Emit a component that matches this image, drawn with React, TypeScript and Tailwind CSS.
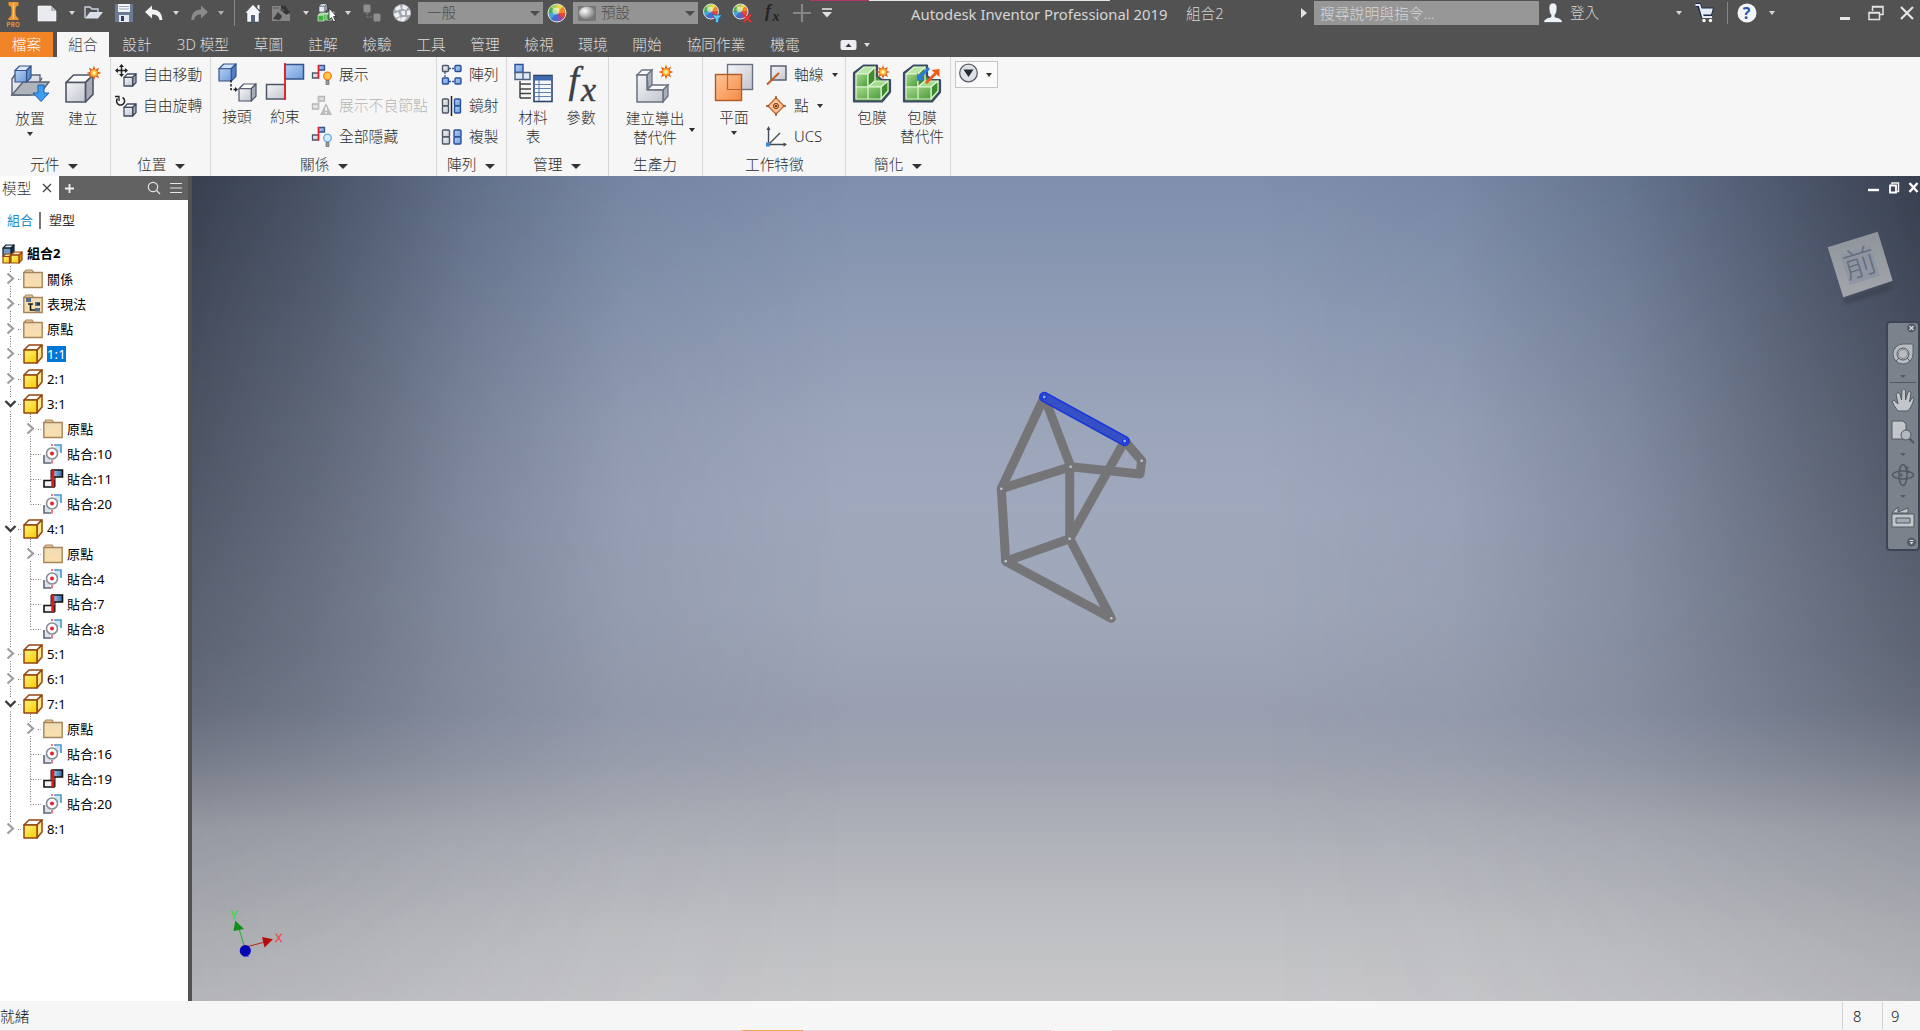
import React from "react";

type Kids = { children?: React.ReactNode };

function Svg({ w, h, className = "", children }: { w: number; h: number; className?: string } & Kids) {
  return (
    <svg width={w} height={h} viewBox={`0 0 ${w} ${h}`} fill="none" className={"block shrink-0 overflow-visible " + className}>
      {children}
    </svg>
  );
}

function Caret({ className = "", w = 6, h = 4 }: { className?: string; w?: number; h?: number }) {
  return (
    <Svg w={w} h={h} className={className}>
      <path d={`M0 0H${w}L${w / 2} ${h}Z`} fill="currentColor" />
    </Svg>
  );
}

/* ---------- shared drawing pieces ---------- */

function Spark({ x, y, s = 1 }: { x: number; y: number; s?: number }) {
  return (
    <g transform={`translate(${x} ${y}) scale(${s})`}>
      <path
        d="M0-7.5L1.4-3.6L5.2-5.2L3.6-1.4L7.5 0L3.6 1.4L5.2 5.2L1.4 3.6L0 7.5L-1.4 3.6L-5.2 5.2L-3.6 1.4L-7.5 0L-3.6-1.4L-5.2-5.2L-1.4-3.6Z"
        fill="#e0641a"
      />
      <circle r="3.5" fill="#ffb32e" />
      <circle r="1.8" fill="#fff3b0" />
    </g>
  );
}

function Cube({ x, y, s, front, top, side, stroke = "#3f4b60", sw = 1.2 }: { x: number; y: number; s: number; front: string; top: string; side: string; stroke?: string; sw?: number }) {
  const d = s * 0.28;
  const f = s - d;
  return (
    <g stroke={stroke} strokeWidth={sw} strokeLinejoin="round">
      <path d={`M${x} ${y + d}L${x + d} ${y}H${x + s}L${x + f} ${y + d}Z`} fill={top} />
      <path d={`M${x + f} ${y + d}L${x + s} ${y}V${y + f}L${x + f} ${y + s}Z`} fill={side} />
      <path d={`M${x} ${y + d}H${x + f}V${y + s}H${x}Z`} fill={front} />
    </g>
  );
}

function Wheel({ cx, cy, r }: { cx: number; cy: number; r: number }) {
  const colors = ["#f6d23c", "#f0892e", "#e2483c", "#8f4fb0", "#3f6ed2", "#46a8d8", "#4cb050", "#a6d048"];
  return (
    <g>
      {colors.map((c, i) => {
        const a = (i * Math.PI) / 4 - Math.PI / 2;
        const b = a + Math.PI / 4;
        return (
          <path
            key={c}
            d={`M${cx} ${cy}L${cx + r * Math.cos(a)} ${cy + r * Math.sin(a)}A${r} ${r} 0 0 1 ${cx + r * Math.cos(b)} ${cy + r * Math.sin(b)}Z`}
            fill={c}
          />
        );
      })}
      <circle cx={cx} cy={cy} r={r} stroke="#e4e4ea" strokeWidth="1" />
      <circle cx={cx - 1} cy={cy - 2} r={r * 0.4} fill="#fff" opacity=".55" />
    </g>
  );
}

function Defs() {
  return (
    <svg width="0" height="0" className="absolute">
      <defs>
        <linearGradient id="gBlue" x1="0" y1="0" x2="1" y2="1">
          <stop offset="0" stopColor="#b4cff2" />
          <stop offset="1" stopColor="#6f9ddc" />
        </linearGradient>
        <linearGradient id="gGrey" x1="0" y1="0" x2="1" y2="1">
          <stop offset="0" stopColor="#f4f5f7" />
          <stop offset="1" stopColor="#c2c6cf" />
        </linearGradient>
        <linearGradient id="gOrange" x1="0" y1="0" x2="1" y2="1">
          <stop offset="0" stopColor="#ffc596" />
          <stop offset="1" stopColor="#f58a45" />
        </linearGradient>
        <linearGradient id="gGreen" x1="0" y1="0" x2="1" y2="1">
          <stop offset="0" stopColor="#a6dc8c" />
          <stop offset="1" stopColor="#4c9a3a" />
        </linearGradient>
        <linearGradient id="gYellow" x1="0" y1="0" x2="1" y2="1">
          <stop offset="0" stopColor="#fff27a" />
          <stop offset="1" stopColor="#f5cc00" />
        </linearGradient>
        <linearGradient id="gTan" x1="0" y1="0" x2="0" y2="1">
          <stop offset="0" stopColor="#f0dcb8" />
          <stop offset="1" stopColor="#fadfaa" />
        </linearGradient>
        <linearGradient id="gSteel" x1="0" y1="0" x2="1" y2="0">
          <stop offset="0" stopColor="#a9d0f2" />
          <stop offset="1" stopColor="#2f68a8" />
        </linearGradient>
        <linearGradient id="gFace" x1="0" y1="0" x2="0" y2="1">
          <stop offset="0" stopColor="#8f949c" />
          <stop offset="1" stopColor="#a3a6ab" />
        </linearGradient>
        <radialGradient id="gBall" cx=".35" cy=".35" r=".7">
          <stop offset="0" stopColor="#fff" />
          <stop offset="1" stopColor="#747474" />
        </radialGradient>
      </defs>
    </svg>
  );
}

/* ---------- title bar ---------- */

function TitleBar() {
  return (
    <div className="flex h-8 items-start bg-[#525252] text-[#d6d6d6]">
      <div className="flex h-[26px] w-[1920px] items-center">
        <Svg w={20} h={26} className="ml-1">
          <path d="M4.500 2H14.500V5.500Q11.500 6 11.500 9V13Q11.500 17 14.500 18V20H4.500V18Q7.500 17 7.500 13V9Q7.500 6 4.500 5.500Z" fill="#eb962f" />
          <path d="M9.500 3V19" stroke="#ffc476" strokeWidth="1.500" />
          <text x="2.500" y="26.500" fontSize="6" fontWeight="700" fill="#e8963a" fontFamily="Inter" letterSpacing=".3">PRO</text>
        </Svg>
        <Svg w={20} h={20} className="ml-[13px]">
          <path d="M1 3H14L19 8V18H1Z" fill="#e9ebf0" stroke="#fff" strokeWidth=".6" />
          <path d="M14 3V8H19Z" fill="#aeb4c0" />
        </Svg>
        <Caret className="ml-3" />
        <Svg w={20} h={20} className="ml-2">
          <path d="M2 15V4H7L9 6H15V9" stroke="#c9d1de" strokeWidth="1.400" />
          <path d="M2 15.500L7 9H20L15 15.500Z" fill="#d9e0ec" />
        </Svg>
        <Svg w={20} h={20} className="ml-[11px]">
          <path d="M1 1H19V19H1Z" fill="#6b7b95" />
          <path d="M4 1H16V9H4Z" fill="#f2f4f8" />
          <path d="M5 3.500H15M5 6H15" stroke="#9aa3b5" />
          <path d="M5 12H15V19H5Z" fill="#e4e8f0" />
          <path d="M7 13H10V18H7Z" fill="#33415c" />
        </Svg>
        <Svg w={20} h={20} className="ml-2.5">
          <path d="M1 9L8 2.500V6.500Q18 6 18.500 17H15.500Q14.500 11 8 11.500V15.500Z" fill="#f2f3f5" />
        </Svg>
        <Caret className="ml-[9px]" />
        <Svg w={20} h={20} className="ml-[11px]">
          <path d="M18 9L11 2.500V6.500Q2 6 1 17H4Q5 11 11 11.500V15.500Z" fill="#8a8a8a" />
        </Svg>
        <Caret className="ml-2 text-[#b0b0b0]" />
        <div className="ml-2.5 h-[26px] w-px bg-[#8a8a8a]" />
        <Svg w={20} h={20} className="ml-2">
          <path d="M2 10L10 1.500L18 10H16V19H4V10Z" fill="#f4f5f7" stroke="#33415c" strokeWidth=".5" />
          <path d="M8 12H12V19H8Z" fill="#5a6478" />
          <path d="M14.500 2H16.500V7L14.500 5Z" fill="#f4f5f7" />
        </Svg>
        <Svg w={20} h={20} className="ml-2">
          <path d="M1 3H11L9 7L14 11H19V18H1Z" fill="#858585" />
          <path d="M2 16L7 9L11 13L9 17Z" fill="#3e3e3e" />
          <path d="M10 3Q16 2 17 8H19.500L15.500 12L11.500 8H14Q13.500 5 10 5.500Z" fill="#333" />
          <path d="M2 5H8" stroke="#666" strokeWidth="1.500" />
        </Svg>
        <Caret className="ml-3" />
        <Svg w={20} h={20} className="ml-2">
          <Cube x={2} y={1} s={8} front="#e8eaee" top="#fff" side="#b8bcc6" sw={0.6} />
          <Cube x={1} y={10} s={8} front="#3fb040" top="#8de080" side="#2a8a30" stroke="#d8f0d8" sw={0.7} />
          <Cube x={9} y={9} s={8} front="#3fb040" top="#8de080" side="#2a8a30" stroke="#d8f0d8" sw={0.7} />
          <path d="M12 5V17L14.500 14.500L16.500 19L18.500 18L16.500 13.500H19.500Z" fill="#fff" stroke="#222" strokeWidth=".8" />
        </Svg>
        <Caret className="ml-2" />
        <Svg w={20} h={20} className="ml-[11px]">
          <rect x="1.500" y="1.500" width="7" height="8" rx="1.500" fill="#8e8e8e" />
          <rect x="11.500" y="10.500" width="7" height="8" rx="1.500" fill="#8e8e8e" />
          <path d="M5 10V14H10" stroke="#777" strokeWidth="1.500" strokeDasharray="2 1.500" />
        </Svg>
        <Svg w={20} h={20} className="ml-2.5">
          <circle cx="10" cy="10" r="9" fill="#a3a7ae" />
          <path d="M3 5L8 2L9 6L4 8ZM11 1.500L16 4L14 7L10 5.500ZM1.500 11L6 9L8 13L4 15ZM9 8L13 8L13 12L10 12ZM15 8L18 7L18.500 12L15 12ZM10 14L15 14L12 18.500L8 18ZM5 16L8 14L9 16L7 18Z" fill="#eceef1" />
        </Svg>
        <div className="ml-1.5 flex h-[22px] w-[125px] shrink-0 items-center justify-between bg-[#949494] pr-[3px] pl-[9px] text-[14.6px] text-[#4c4c4c]">
          <span>一般</span>
          <Caret w={10} h={5} />
        </div>
        <Svg w={20} h={20} className="ml-1">
          <Wheel cx={10} cy={10} r={9} />
        </Svg>
        <div className="ml-1.5 flex h-[22px] w-[125px] shrink-0 items-center bg-[#949494] pr-[3px] pl-[5px] text-[14.6px] text-[#4c4c4c]">
          <Svg w={18} h={15}>
            <rect width="18" height="15" fill="#777" />
            <ellipse cx="9" cy="7" rx="8" ry="6.500" fill="url(#gBall)" />
          </Svg>
          <span className="ml-[5px] grow">預設</span>
          <Caret w={10} h={5} />
        </div>
        <Svg w={20} h={20} className="ml-1">
          <Wheel cx={9} cy={8.500} r={7.500} />
          <path d="M10 12H20L16.500 16V19.500H13.500V16Z" fill="#5fc8f5" stroke="#2a5f8a" strokeWidth=".8" />
        </Svg>
        <Svg w={20} h={20} className="ml-2.5">
          <Wheel cx={8.500} cy={8.500} r={7.500} />
          <path d="M11.500 11.500L19 19M19 11.500L11.500 19" stroke="#e8342c" strokeWidth="2" />
        </Svg>
        <Svg w={20} h={22} className="ml-2.5">
          <text x="3" y="15" fontSize="18" fontStyle="italic" fontWeight="700" fill="#242424" fontFamily="Liberation Serif">f</text>
          <text x="10.500" y="19" fontSize="14" fontStyle="italic" fontWeight="700" fill="#242424" fontFamily="Liberation Serif">x</text>
        </Svg>
        <Svg w={18} h={18} className="ml-[11px]">
          <path d="M9 0V18M0 9H18" stroke="#868686" strokeWidth="2.200" />
        </Svg>
        <Svg w={10} h={10} className="ml-[11px]">
          <path d="M0 1H10" stroke="#e0e0e0" strokeWidth="1.600" />
          <path d="M0 4H10L5 9.500Z" fill="#e0e0e0" />
        </Svg>
        <div className="ml-[79px] w-[260px] shrink-0 pt-0.5 text-[14.85px] font-normal whitespace-nowrap">Autodesk Inventor Professional 2019</div>
        <div className="ml-[15px] w-[100px] shrink-0 pt-px text-[14.6px] whitespace-nowrap">組合2</div>
        <Svg w={6} h={10} className="ml-[15px]">
          <path d="M0 0L6 5L0 10Z" fill="#e0e0e0" />
        </Svg>
        <div className="ml-[7px] flex h-6 w-[225px] shrink-0 items-center bg-[#969696] pl-[6px] text-[14.8px] whitespace-nowrap text-[#d8d8d8]">搜尋說明與指令...</div>
        <Svg w={20} h={20} className="ml-1">
          <path d="M6 5Q6 0 10 0Q14 0 14 5Q14 10 12 12V14Q19 15 19.500 19.500H.5Q1 15 8 14V12Q6 10 6 5Z" fill="#eef1f6" stroke="#3a4252" strokeWidth=".6" />
        </Svg>
        <div className="ml-[7px] w-[60px] shrink-0 text-[14.6px]">登入</div>
        <Caret className="ml-[46px]" />
        <Svg w={20} h={20} className="ml-[13px]">
          <path d="M1 2H4L7.500 13H17" stroke="#1d2b4a" strokeWidth="4" />
          <path d="M5 5H18.500L16.500 12H7Z" fill="#e4ebf6" stroke="#1d2b4a" />
          <path d="M.5 2H4.500L8 14H17" stroke="#e4ebf6" strokeWidth="1.800" />
          <circle cx="9" cy="17.500" r="1.700" fill="#fff" />
          <circle cx="15.500" cy="17.500" r="1.700" fill="#fff" />
        </Svg>
        <div className="ml-3 h-[22px] w-px bg-[#858585]" />
        <Svg w={20} h={20} className="ml-[9px]">
          <circle cx="10" cy="10" r="9.500" fill="#f3f5f8" />
          <text x="5.800" y="15.800" fontSize="16" fontWeight="700" fill="#2c55a8" fontFamily="Open Sans">?</text>
        </Svg>
        <Caret className="ml-3" />
        <Svg w={10} h={20} className="ml-[65px]">
          <path d="M0 15.500H10" stroke="#e4e4e4" strokeWidth="3" />
        </Svg>
        <Svg w={16} h={16} className="ml-[18px]">
          <path d="M4.500 6V1.500H15V9.500H11.500M4.500 2H15M1 7.500H11.500V14.500H1ZM1 8H11.500" stroke="#e4e4e4" strokeWidth="1.500" />
        </Svg>
        <Svg w={14} h={14} className="ml-4">
          <path d="M1 1L13 13M13 1L1 13" stroke="#e4e4e4" strokeWidth="2.200" />
        </Svg>
      </div>
    </div>
  );
}

function TabRow() {
  const regular = ["草圖", "註解", "檢驗", "工具", "管理", "檢視", "環境", "開始"];
  return (
    <div className="flex h-[25px] items-stretch bg-[#525252] text-center text-[14.67px] leading-[25px] whitespace-nowrap text-[#dcdcdc]">
      <div className="w-[53px] bg-[#f08426] text-white">檔案</div>
      <div className="ml-1 w-[52px] bg-[#f6f6f6] text-[#444]">組合</div>
      <div className="w-14">設計</div>
      <div className="w-[76px]">3D 模型</div>
      {regular.map((t, i) => (
        <div key={t} className={i === 0 ? "w-[55px]" : "w-[54px]"}>{t}</div>
      ))}
      <div className="w-[84px]">協同作業</div>
      <div className="w-[54px]">機電</div>
      <div className="flex items-center pl-[28px]">
        <Svg w={18} h={12}>
          <rect x=".5" y="1" width="16" height="10" rx="2" fill="#eceef2" />
          <path d="M5.500 8L8.500 4.500L11.500 8Z" fill="#333" />
        </Svg>
        <Caret className="ml-1.5" />
      </div>
    </div>
  );
}

/* ---------- ribbon icons ---------- */

const IPlace = () => (
  <Svg w={40} h={40}>
    <path d="M2 15L5 11H10V20H30V17L32 14" stroke="#5b6475" strokeWidth="1.400" />
    <path d="M2 15L5 11H30V20L20 31H2Z" fill="url(#gGrey)" stroke="#5b6475" strokeWidth="1.400" />
    <path d="M2 31L13 18H39L29 31Z" fill="#aeb3bc" stroke="#5b6475" strokeWidth="1.400" />
    <Cube x={5} y={2} s={16} front="url(#gBlue)" top="#dbe9fa" side="#5f8fd0" stroke="#35548a" />
    <path d="M28 21H34V29H39L31 37.500L23 29H28Z" fill="#3f9df0" stroke="#1a63b8" />
  </Svg>
);
const ICreate = () => (
  <Svg w={40} h={40}>
    <Cube x={3} y={11} s={27} front="url(#gGrey)" top="#fbfbfc" side="#a8acb6" stroke="#4d5667" sw={1.6} />
    <Spark x={31} y={9} />
  </Svg>
);
const IMove = () => (
  <Svg w={22} h={22}>
    <Cube x={9} y={10} s={12} front="url(#gGrey)" top="#fff" side="#a8acb6" sw={1.3} />
    <path d="M6.500 1V12M1 6.500H12" stroke="#222" strokeWidth="1.500" />
    <path d="M6.500 0L9 3H4ZM6.500 13L9 10H4ZM0 6.500L3 4V9ZM13 6.500L10 4V9Z" fill="#222" />
  </Svg>
);
const IRotate = () => (
  <Svg w={22} h={22}>
    <Cube x={9} y={9} s={12} front="url(#gGrey)" top="#fff" side="#a8acb6" sw={1.3} />
    <path d="M7.500 2.500A4 4 0 1 1 2.500 3.500" stroke="#222" strokeWidth="1.500" />
    <path d="M0 1.500H4V6" stroke="#222" strokeWidth="1.300" />
  </Svg>
);
const IJoint = () => (
  <Svg w={40} h={40}>
    <Cube x={2} y={2} s={17} front="url(#gBlue)" top="#cfe1f8" side="#4f80c4" stroke="#35548a" />
    <Cube x={22} y={22} s={17} front="url(#gGrey)" top="#fff" side="#a8acb6" stroke="#4d5667" />
    <path d="M14 18V27.500H19" stroke="#222" strokeWidth="1.500" strokeDasharray="2.500 1.500" />
    <path d="M18 25L21 27.500L18 30Z" fill="#222" />
  </Svg>
);
const IConstrain = () => (
  <Svg w={40} h={40}>
    <path d="M20 2.500H38.500V17H20Z" fill="url(#gBlue)" stroke="#35548a" strokeWidth="1.500" />
    <path d="M1.500 22.500H20V37H1.500Z" fill="url(#gGrey)" stroke="#4d5667" strokeWidth="1.500" />
    <path d="M20 1V38" stroke="#ee1c24" strokeWidth="1.800" />
  </Svg>
);
function IShow({ kind }: { kind: "on" | "warn" | "off" }) {
  const g = kind === "warn";
  return (
    <Svg w={22} h={22}>
      <path d="M7.500 1.500H13.500V6H7.500Z" fill={g ? "#ddd" : "url(#gBlue)"} stroke={g ? "#b5b5b5" : "#35548a"} strokeWidth="1.300" />
      <path d="M1.500 9H7.500V14H1.500Z" fill={g ? "#e4e4e4" : "url(#gGrey)"} stroke={g ? "#b5b5b5" : "#4d5667"} strokeWidth="1.300" />
      <path d="M7.500 1V14.500" stroke={g ? "#c0c0c0" : "#ee1c24"} strokeWidth="1.600" />
      {g ? (
        <>
          <path d="M15 8L21 20H9Z" fill="#bcbcbc" />
          <path d="M15 12V16M15 17V18.500" stroke="#fff" strokeWidth="1.500" />
        </>
      ) : (
        <>
          <circle cx="16.500" cy="12" r="3.800" fill={kind === "on" ? "#ffc84a" : "#d4ecff"} stroke={kind === "on" ? "#f08020" : "#6ea8e0"} strokeWidth="1.300" />
          <path d="M15 16.500H18V20.500H15Z" fill="#9a9ea8" stroke="#555" strokeWidth=".6" />
        </>
      )}
    </Svg>
  );
}
const Pad = ({ x, y, w = 6, h = 6, blue = true }: { x: number; y: number; w?: number; h?: number; blue?: boolean }) => (
  <rect x={x} y={y} width={w} height={h} rx="1" fill={blue ? "url(#gBlue)" : "url(#gGrey)"} stroke={blue ? "#27509a" : "#4d5667"} strokeWidth="1.400" />
);
const IPattern = () => (
  <Svg w={22} h={22}>
    <path d="M4 8V14M8 4.500H14M8 17.500H14" stroke="#35548a" strokeWidth="1.300" strokeDasharray="2 1" />
    <Pad x={1.500} y={1.500} blue={false} />
    <Pad x={14} y={1.500} />
    <Pad x={1.500} y={14} />
    <Pad x={14} y={14} />
  </Svg>
);
const IMirror = () => (
  <Svg w={22} h={22}>
    <Pad x={1.500} y={4} w={6} h={7} blue={false} />
    <Pad x={1.500} y={11} w={6} h={7} blue={false} />
    <Pad x={13.500} y={4} w={6} h={7} />
    <Pad x={13.500} y={11} w={6} h={7} />
    <path d="M10.500 1V21" stroke="#222" strokeWidth="1.500" />
  </Svg>
);
const ICopy = () => (
  <Svg w={22} h={22}>
    <Pad x={1.500} y={4} w={7} h={7} blue={false} />
    <Pad x={1.500} y={11} w={7} h={7} blue={false} />
    <Pad x={13} y={4} w={7} h={7} />
    <Pad x={13} y={11} w={7} h={7} />
  </Svg>
);
const IBom = () => (
  <Svg w={40} h={40}>
    <path d="M2 1.500H10V9.500H2Z" fill="url(#gBlue)" stroke="#27509a" strokeWidth="1.400" />
    <path d="M2 9.500H10V16.500H2ZM10 9.500H17V16.500H10Z" fill="#dfe9f7" stroke="#4d6080" strokeWidth="1.400" />
    <path d="M7 18V35M7 21H18M7 26H18M7 30.500H18M7 35H18" stroke="#444" strokeWidth="1.500" />
    <rect x="21" y="12.500" width="18" height="26" fill="#f3f6fb" stroke="#2f4368" strokeWidth="1.600" />
    <path d="M21 13H39V17.500H21Z" fill="#3c67aa" />
    <path d="M21 21.500H39M21 25.500H39M21 29.500H39M21 33.500H39M26 17V38" stroke="#6080b0" strokeWidth="1.100" />
  </Svg>
);
const IFx = () => (
  <Svg w={40} h={40}>
    <text x="7.500" y="30" fontSize="38" fontStyle="italic" fill="#3b4048" stroke="#3b4048" strokeWidth=".4" fontFamily="Liberation Serif">f</text>
    <text x="20" y="38" fontSize="34" fontStyle="italic" fill="#3b4048" stroke="#3b4048" strokeWidth=".4" fontFamily="Liberation Serif">x</text>
  </Svg>
);
const IDerive = () => (
  <Svg w={40} h={40}>
    <path d="M2 11L7 6H17L12 11Z" fill="#fafafa" stroke="#6a7180" strokeWidth="1.300" />
    <path d="M12 11L17 6V21L13 25Z" fill="#a7adb9" stroke="#6a7180" strokeWidth="1.300" />
    <path d="M12 26L17 21H33L28 26Z" fill="#fafafa" stroke="#6a7180" strokeWidth="1.300" />
    <path d="M28 26L33 21V32L28 38Z" fill="#a7adb9" stroke="#6a7180" strokeWidth="1.300" />
    <path d="M2 11H12V26H28V38H2Z" fill="url(#gGrey)" stroke="#6a7180" strokeWidth="1.500" strokeLinejoin="round" />
    <Spark x={31} y={8} />
  </Svg>
);
const IPlane = () => (
  <Svg w={40} h={40}>
    <rect x="13.500" y="1.500" width="25" height="25" fill="url(#gGrey)" stroke="#6a7180" strokeWidth="1.400" />
    <rect x="1.500" y="11.500" width="26" height="26" fill="url(#gOrange)" stroke="#b05a24" strokeWidth="1.400" />
    <path d="M13.500 12V26.500H27" stroke="#b0683a" strokeWidth="1.200" />
  </Svg>
);
const IAxis = () => (
  <Svg w={22} h={22}>
    <rect x="5" y="2" width="15" height="14" fill="url(#gGrey)" stroke="#5a6170" strokeWidth="1.500" />
    <path d="M1 20.500L13 9" stroke="#c65a20" strokeWidth="2" />
  </Svg>
);
const IPoint = () => (
  <Svg w={22} h={22}>
    <path d="M10 3L18 11L10 19L2 11Z" fill="#ffc596" stroke="#c26a30" strokeWidth="1.300" />
    <path d="M10 1V4M10 18V21M0 11H3M17 11H20" stroke="#8a4a20" strokeWidth="1.400" />
    <circle cx="10" cy="11" r="2.600" fill="#f9a468" stroke="#7a4018" />
    <circle cx="10" cy="11" r="1" fill="#222" />
  </Svg>
);
const IUcs = () => (
  <Svg w={22} h={22}>
    <path d="M2.500 2V18.500H20M3 18L14 7" stroke="#454b57" strokeWidth="1.400" />
    <path d="M.5 4L2.500 0L4.500 4ZM17.500 16.500L21 18.500L17.500 20.500Z" fill="#454b57" />
    <rect x="0" y="16.500" width="4" height="4" fill="#2f8ae0" />
  </Svg>
);
function IWrap({ sub }: { sub?: boolean }) {
  return (
    <Svg w={40} h={40}>
      <path d="M2 10L12 2.500H25V13L30 17H38V29L30 38.500H2Z" fill="#4c9a3a" stroke="#3c4a66" strokeWidth="2.200" strokeLinejoin="round" />
      <g stroke="#e2f5d6" strokeWidth="1.200" strokeLinejoin="round">
        <path d="M4 11L12 4H23L16 11Z" fill="#b9e6a4" />
        <path d="M4 11H16V24H4Z" fill="url(#gGreen)" />
        <path d="M16 11L23 4V18L16 24Z" fill="#3f8c30" />
        <path d="M16 24L23 18H36L29 24Z" fill="#a4dc8c" />
        <path d="M29 24L36 18V28L29 36Z" fill="#3f8c30" />
        <path d="M4 24H29V36H4Z" fill="url(#gGreen)" />
        <path d="M16 24V36" />
      </g>
      {sub ? (
        <>
          <path d="M27 5L18 14" stroke="#2a7be0" strokeWidth="3" />
          <path d="M15 18V10L22 17Z" fill="#2a7be0" />
          <path d="M24 20L34 10" stroke="#ee5a1c" strokeWidth="3" />
          <path d="M37.500 6V14L29.500 7Z" fill="#ee5a1c" />
        </>
      ) : (
        <Spark x={31} y={9} s={0.95} />
      )}
    </Svg>
  );
}

/* ---------- ribbon ---------- */

function Panel({ className, title, titlePad, arrow = true, children }: { className: string; title: string; titlePad: string; arrow?: boolean } & Kids) {
  return (
    <div className={"flex shrink-0 flex-col border-r border-[#d6d6d6] " + className}>
      <div className="flex h-[97px] items-start">{children}</div>
      <div className={"flex h-[21px] items-center leading-[19px] " + titlePad}>
        <span>{title}</span>
        {arrow && <Caret w={10} h={5} className="mt-1 ml-[9px] text-[#333]" />}
      </div>
    </div>
  );
}

function Big({ icon, lines, className, arrow }: { icon: React.ReactNode; lines: string[]; className: string; arrow?: boolean }) {
  return (
    <div className={"flex shrink-0 flex-col items-center " + className}>
      {icon}
      <div className="mt-[5px] text-center leading-[19px]">
        {lines.map((l) => (
          <div key={l}>{l}</div>
        ))}
      </div>
      {arrow && <Caret className="mt-1 text-[#333]" />}
    </div>
  );
}

function Rows({ className = "", items }: { className?: string; items: { icon: React.ReactNode; text: string; arrow?: boolean; off?: boolean }[] }) {
  return (
    <div className={"flex flex-col pt-[2px] " + className}>
      {items.map((r) => (
        <div key={r.text} className={"flex h-[31px] items-center text-[14.8px] " + (r.off ? "text-[#b4b4b4]" : "")}>
          {r.icon}
          <span className="ml-[6px]">{r.text}</span>
          {r.arrow && <Caret className="ml-2 text-[#333]" />}
        </div>
      ))}
    </div>
  );
}

function Ribbon() {
  return (
    <div className="flex h-[119px] bg-[#f6f6f6] text-[14.67px] whitespace-nowrap text-[#2c2c2c]">
      <Panel className="w-[111px]" title="元件" titlePad="pl-[30px]">
        <Big className="w-[60px] pt-[7px]" icon={<IPlace />} lines={["放置"]} arrow />
        <Big className="w-[46px] pt-[7px]" icon={<ICreate />} lines={["建立"]} />
      </Panel>
      <Panel className="w-[100px]" title="位置" titlePad="pl-[26px]">
        <Rows className="pl-[4px]" items={[{ icon: <IMove />, text: "自由移動" }, { icon: <IRotate />, text: "自由旋轉" }]} />
      </Panel>
      <Panel className="w-[226px]" title="關係" titlePad="pl-[89px]">
        <Big className="ml-[6px] w-10 pt-[5px]" icon={<IJoint />} lines={["接頭"]} />
        <Big className="ml-[8px] w-10 pt-[5px]" icon={<IConstrain />} lines={["約束"]} />
        <Rows
          className="ml-[6px]"
          items={[
            { icon: <IShow kind="on" />, text: "展示" },
            { icon: <IShow kind="warn" />, text: "展示不良節點", off: true },
            { icon: <IShow kind="off" />, text: "全部隱藏" },
          ]}
        />
      </Panel>
      <Panel className="w-[70px]" title="陣列" titlePad="pl-[10px]">
        <Rows className="pl-[4px]" items={[{ icon: <IPattern />, text: "陣列" }, { icon: <IMirror />, text: "鏡射" }, { icon: <ICopy />, text: "複製" }]} />
      </Panel>
      <Panel className="w-[102px]" title="管理" titlePad="pl-[26px]">
        <Big className="ml-[6px] w-10 pt-[6px]" icon={<IBom />} lines={["材料", "表"]} />
        <Big className="ml-[8px] w-10 pt-[6px]" icon={<IFx />} lines={["參數"]} />
      </Panel>
      <Panel className="w-[94px]" title="生產力" titlePad="pl-[24px]" arrow={false}>
        <Big className="ml-[15px] w-[62px] pt-[7px]" icon={<IDerive />} lines={["建立導出", "替代件"]} />
        <Caret className="mt-[71px] ml-[3px]" />
      </Panel>
      <Panel className="w-[143px]" title="工作特徵" titlePad="pl-[42px]" arrow={false}>
        <Big className="ml-[11px] w-10 pt-[6px]" icon={<IPlane />} lines={["平面"]} arrow />
        <Rows
          className="ml-[12px]"
          items={[
            { icon: <IAxis />, text: "軸線", arrow: true },
            { icon: <IPoint />, text: "點", arrow: true },
            { icon: <IUcs />, text: "UCS" },
          ]}
        />
      </Panel>
      <Panel className="w-[105px]" title="簡化" titlePad="pl-[28px]">
        <Big className="ml-[6px] w-10 pt-[6px]" icon={<IWrap />} lines={["包膜"]} />
        <Big className="ml-[8px] w-[44px] pt-[6px]" icon={<IWrap sub />} lines={["包膜", "替代件"]} />
      </Panel>
      <div className="mt-1 ml-1 flex h-[27px] w-[43px] items-center border border-[#c6c6c6] bg-[#fafafa] pl-[3px]">
        <Svg w={20} h={20} className="-mt-1">
          <circle cx="9.500" cy="10" r="8.800" fill="#dfe1e6" stroke="#5a5f6a" strokeWidth="1.300" />
          <path d="M4.500 6.500H14.500L9.500 14Z" fill="#222a38" />
        </Svg>
        <Caret className="ml-[7px] text-[#333]" />
      </div>
    </div>
  );
}

/* ---------- model browser ---------- */

type Kind = "folder" | "rep" | "part" | "insert" | "mate";
type Node = { level: 1 | 2; kind: Kind; text: string; open?: boolean; last?: boolean; selected?: boolean };

const part = (text: string, open = false, extra: Partial<Node> = {}): Node => ({ level: 1, kind: "part", text, open, ...extra });
const leaf = (kind: Kind, text: string, last = false): Node => ({ level: 2, kind, text, last });

const nodes: Node[] = [
  { level: 1, kind: "folder", text: "關係" },
  { level: 1, kind: "rep", text: "表現法" },
  { level: 1, kind: "folder", text: "原點" },
  part("1:1", false, { selected: true }),
  part("2:1"),
  part("3:1", true),
  leaf("folder", "原點"),
  leaf("insert", "貼合:10"),
  leaf("mate", "貼合:11"),
  leaf("insert", "貼合:20", true),
  part("4:1", true),
  leaf("folder", "原點"),
  leaf("insert", "貼合:4"),
  leaf("mate", "貼合:7"),
  leaf("insert", "貼合:8", true),
  part("5:1"),
  part("6:1"),
  part("7:1", true),
  leaf("folder", "原點"),
  leaf("insert", "貼合:16"),
  leaf("mate", "貼合:19"),
  leaf("insert", "貼合:20", true),
  part("8:1", false, { last: true }),
];

function NodeIcon({ kind }: { kind: Kind }) {
  if (kind === "part")
    return (
      <Svg w={20} h={20}>
        <g stroke="#944610" strokeWidth="1.500" strokeLinejoin="round">
          <path d="M1 6L6 1H19L14 6Z" fill="#fff" />
          <path d="M14 6L19 1V13L14 19Z" fill="#ffe98a" />
          <path d="M1 6H14V19H1Z" fill="url(#gYellow)" />
        </g>
      </Svg>
    );
  if (kind === "insert")
    return (
      <Svg w={20} h={20}>
        <path d="M11 1H18V9" stroke="#4a92cc" strokeWidth="1.600" />
        <path d="M12 2H17V8H12Z" fill="#cfe6f6" />
        <path d="M1 11V19H8" stroke="#5a6478" strokeWidth="1.600" />
        <path d="M2 11H7V18H2Z" fill="#dfe3e8" />
        <circle cx="9" cy="9.500" r="5.500" fill="#fff" stroke="#8a8d94" strokeWidth="1.600" />
        <circle cx="9" cy="9.500" r="2" fill="#e82030" />
        <path d="M9 0V2M9 16V19.500" stroke="#e8404c" strokeWidth="1.400" />
      </Svg>
    );
  if (kind === "mate")
    return (
      <Svg w={20} h={20}>
        <path d="M9 1H19.500V8H9Z" fill="url(#gSteel)" stroke="#111" strokeWidth="1.600" />
        <path d="M1 11.500H11V18H1Z" fill="#f1f1f1" stroke="#111" strokeWidth="1.600" />
        <path d="M8 1V11" stroke="#111" strokeWidth="1" />
        <path d="M9.800 1V18" stroke="#e01818" strokeWidth="3" />
        <path d="M12 8V18" stroke="#111" strokeWidth="1" />
      </Svg>
    );
  return (
    <Svg w={20} h={20}>
      <path d="M1 3.500L3 1H9L10.500 3.500" fill="#e8cfa0" stroke="#a8845c" strokeWidth="1.200" />
      <path d="M.8 3.500H19.200V18.500H.8Z" fill="url(#gTan)" stroke="#a8845c" strokeWidth="1.400" />
      {kind === "rep" && (
        <g>
          <path d="M3 4H8V8H3ZM12 8H17V12H12ZM12 14H17V17.500H12Z" fill="#4f708c" />
          <path d="M5 10H10M7.500 10V16H12M14 10H17" stroke="#1c1c1c" strokeWidth="1.600" />
        </g>
      )}
    </Svg>
  );
}

function Gutter({ node }: { node: Node }) {
  const deep = node.level === 2;
  const cx = deep ? 30.5 : 10.5;
  const w = deep ? 43 : 23;
  const chevron = !deep || node.kind === "folder";
  const dash = { stroke: "#777", strokeWidth: 1, strokeDasharray: "1 1.5" };
  return (
    <Svg w={w} h={25}>
      {deep && <path d="M10.500 0V25" {...dash} />}
      <path d={`M${cx} 0V${node.last ? 12.5 : node.open ? 13 : 25}`} {...dash} />
      {node.open && (
        <>
          <path d="M10.500 18V25" {...dash} />
          <path d="M30.500 23V25" {...dash} />
        </>
      )}
      <path d={`M${chevron ? cx + 7.5 : cx} 13.500H${w - 2}`} {...dash} />
      {chevron && <rect x={cx - 5} y={6} width={11} height={14} fill="#fff" />}
      {chevron &&
        (node.open ? (
          <path d={`M${cx - 5} 10L${cx} 15L${cx + 5} 10`} stroke="#3c3c3c" strokeWidth="2.400" />
        ) : (
          <path d={`M${cx - 3} 7.500L${cx + 2.500} 12.500L${cx - 3} 17.500`} stroke="#9c9c9c" strokeWidth="2.200" />
        ))}
    </Svg>
  );
}

function Browser() {
  return (
    <div className="flex w-48 shrink-0 flex-col border-r-4 border-[#525252] bg-white">
      <div className="flex h-6 items-center bg-[#626262] text-[14.67px] text-[#333]">
        <div className="flex h-6 w-[59px] items-center bg-white pl-[2px]">
          <span>模型</span>
          <Svg w={10} h={10} className="ml-[11px]">
            <path d="M1 1L9 9M9 1L1 9" stroke="#444" strokeWidth="1.300" />
          </Svg>
        </div>
        <Svg w={9} h={9} className="ml-[6px]">
          <path d="M4.500 0V9M0 4.500H9" stroke="#f0f0f0" strokeWidth="1.800" />
        </Svg>
        <Svg w={14} h={14} className="ml-[73px]">
          <circle cx="6" cy="6" r="4.700" stroke="#e0e0e0" strokeWidth="1.200" />
          <path d="M9.500 9.500L13 13" stroke="#e0e0e0" strokeWidth="1.300" />
        </Svg>
        <Svg w={12} h={12} className="ml-[9px]">
          <path d="M0 1.500H12M0 6H12M0 10.500H12" stroke="#e8e8e8" strokeWidth="1.200" />
        </Svg>
      </div>
      <div className="flex h-[41px] items-center pl-[7px] text-[13px] font-normal">
        <span className="text-[#1f8ec4]">組合</span>
        <div className="ml-1.5 h-[17px] w-[2px] bg-[#777]" />
        <span className="ml-2 text-[#333]">塑型</span>
      </div>
      <div className="flex h-[25px] items-center pl-[2px] text-[13px] font-bold text-black">
        <Svg w={20} h={20}>
          <Cube x={1} y={1} s={11} front="#6f9cc4" top="#d8e8f4" side="#1f3048" stroke="#16202c" />
          <Cube x={1} y={10} s={9} front="url(#gYellow)" top="#ffe98a" side="#c98a1a" stroke="#944610" />
          <Cube x={9} y={8} s={11} front="url(#gYellow)" top="#ffe9b0" side="#d8901a" stroke="#944610" />
        </Svg>
        <span className="ml-[5px]">組合2</span>
      </div>
      {nodes.map((n, i) => (
        <div key={i} className="flex h-[25px] items-center text-[13px] leading-4 font-normal text-black">
          <Gutter node={n} />
          <NodeIcon kind={n.kind} />
          <span className={"ml-1 tracking-[.15px] " + (n.selected ? "bg-[#0078d7] text-white" : "")}>{n.text}</span>
        </div>
      ))}
    </div>
  );
}

/* ---------- 3D canvas ---------- */

function Linkage() {
  return (
    <svg className="absolute top-[194px] left-[768px]" width="220" height="270" viewBox="960 370 220 270" fill="none">
      <g stroke="#757577" strokeWidth="9" strokeLinecap="round" strokeLinejoin="round">
        <path d="M1044.300 397L1001.300 488.700L1070.700 466.700Z" />
        <path d="M1070.700 466.700L1140 474L1141.700 460.700L1124.700 441L1069.700 538.700V466.700" />
        <path d="M1001.300 488.700L1005.700 561.300L1069.700 538.700L1111.300 618.300L1005.700 561.300" />
      </g>
      <path d="M1044.300 397L1124.700 441" stroke="#1734dc" strokeWidth="10.500" strokeLinecap="round" />
      <path d="M1044.300 397L1124.700 441" stroke="#3450c4" strokeWidth="7.500" strokeLinecap="round" />
      {[[1044.3, 397], [1124.7, 441]].map(([x, y]) => (
        <circle key={x} cx={x} cy={y} r="2" fill="#a8b4dc" stroke="#1030e8" strokeWidth="1.200" />
      ))}
      {[[1141.7, 460.7], [1070.7, 466.7], [1001.3, 488.7], [1005.7, 561.3], [1069.7, 538.7], [1111.3, 618.3]].map(([x, y]) => (
        <circle key={x} cx={x} cy={y} r="1.300" fill="#c4c8d0" />
      ))}
    </svg>
  );
}

function ViewCube() {
  return (
    <svg className="absolute top-[44px] left-[1618px]" width="100" height="96" viewBox="1810 220 100 96" fill="none">
      <path d="M1843 299L1895 283L1888 290L1845 304Z" fill="#2c323e" opacity=".5" className="blur-[2px]" />
      <path d="M1827.700 247.300L1877.700 231.700L1892.700 280.700L1843.300 297.300Z" fill="url(#gFace)" />
      <path d="M1840 255L1870 245.500L1880 275.500L1850 285Z" fill="#8f95a2" />
      <text x="1860" y="275" fontSize="33" fill="#666d7c" textAnchor="middle" transform="rotate(-17 1860 264)" fontFamily="Noto Sans CJK TC" fontWeight="300">前</text>
    </svg>
  );
}

function NavBar() {
  return (
    <div className="absolute top-[145px] right-0 flex h-[230px] w-[34px] flex-col items-center rounded-[4px] border-2 border-[#3e4552] bg-[#7c828c]">
      <Svg w={30} h={226}>
        <g stroke="#515862">
          <circle cx="23.500" cy="5" r="4" fill="#565d68" />
          <path d="M21.500 3L25.500 7M25.500 3L21.500 7" stroke="#d6d9de" strokeWidth="1.200" />
          <path d="M15 21H25V31A10 10 0 1 1 15 21Z" fill="#b8bbc1" stroke="#5a606b" />
          <circle cx="15" cy="31" r="6" />
          <circle cx="15" cy="31" r="4.500" opacity=".5" />
          <path d="M8 38L11 35M22 38L19 35" />
          <path d="M2 59.500H28" />
          <path d="M10 88Q5 82 4 78Q6 76 9 80L10 81L8 71Q10 68 12 71L13.500 77L14 67Q16 65 17.500 67L17.500 77L20 69Q22 67 23 70L21.500 79L24 75Q26 74 26 76Q24 84 20 88Z" fill="#c2c5ca" />
          <path d="M4 98H15L18 101V116H4Z" fill="#c2c5ca" />
          <circle cx="18" cy="112" r="5" fill="#b2b7c0" />
          <path d="M21.500 115.500L26 120" strokeWidth="2.200" />
          <ellipse cx="15" cy="152" rx="10.500" ry="4" strokeWidth="1.500" />
          <ellipse cx="15" cy="152" rx="4" ry="10.500" strokeWidth="1.500" />
          <path d="M13 150V154M11 152H15M19 143V147M17 145H21M20 147V151M18 149H22" />
          <path d="M4 191H26V204H4Z" fill="#c2c5ca" />
          <path d="M8 195H22V200H8Z" fill="#a4aab8" />
          <path d="M4 190L10 184V189L20 185V190Z" fill="#c2c5ca" />
          <circle cx="23.500" cy="219" r="4" fill="#565d68" />
          <path d="M21.500 217.500H25.500" stroke="#d6d9de" />
        </g>
        <path d="M12 52H18L15 55ZM12 130H18L15 133ZM12 172H18L15 175Z" fill="#555b66" />
        <path d="M21.500 219H25.500L23.500 221.500Z" fill="#d6d9de" />
      </Svg>
    </div>
  );
}

function Canvas() {
  return (
    <div className="relative grow overflow-hidden bg-[linear-gradient(to_bottom,#7e8eac_0%,#8f9cb5_17%,#9ba5ba_30%,#a0a8bd_40%,#9fa7b9_52%,#999fb0_65%,#9fa3b0_71%,#a8abb4_76%,#b2b4bb_82%,#c0c1c4_92%,#c7c7ca_100%)]">
      <div className="absolute inset-0 bg-[linear-gradient(to_right,rgba(48,54,68,.95)_0%,rgba(50,58,73,.76)_7%,rgba(60,71,92,.46)_16%,rgba(72,87,114,.18)_25%,rgba(80,96,126,0)_38%,rgba(80,96,126,0)_62%,rgba(74,90,118,.13)_73%,rgba(62,74,96,.4)_83%,rgba(52,60,76,.74)_93%,rgba(48,54,68,.95)_100%)] [mask-image:linear-gradient(to_bottom,rgba(0,0,0,.94)_0%,rgba(0,0,0,.82)_20%,rgba(0,0,0,.73)_40%,rgba(0,0,0,.61)_57%,rgba(0,0,0,.52)_64%,rgba(0,0,0,.37)_71%,rgba(0,0,0,.2)_79%,rgba(0,0,0,.13)_100%)]" />
      <Linkage />
      <ViewCube />
      <NavBar />
      <svg className="absolute top-[5px] right-0" width="56" height="14" viewBox="0 0 56 14" fill="none">
        <path d="M4 9H15" stroke="#fff" strokeWidth="2.400" />
        <path d="M28 3.500V2H34.500V10.500H33" stroke="#f2f2f2" strokeWidth="1.500" />
        <path d="M26 4.500H32V11.500H26Z" stroke="#fff" strokeWidth="1.800" />
        <path d="M45.500 2L53.500 11M53.500 2L45.500 11" stroke="#fff" strokeWidth="2.400" />
      </svg>
      <svg className="absolute top-[724px] left-[28px] overflow-visible" width="70" height="64" viewBox="220 900 70 64" fill="none">
        <path d="M245.300 950L238 925" stroke="#20b030" />
        <path d="M235.300 920.500L244 929L233.500 931Z" fill="#109018" />
        <path d="M246 947L265 942" stroke="#c02020" />
        <path d="M273 939.300L262 937L264.500 947.500Z" fill="#b80c0c" />
        <circle cx="245.300" cy="950.700" r="5.600" fill="#0404b4" />
        <path d="M243 956.500H249" stroke="#5a5af0" />
        <text x="230.200" y="918.500" fontSize="11" fontWeight="400" fill="#3cd850" stroke="#3cd850" strokeWidth=".5" fontFamily="Liberation Sans">Y</text>
        <text x="275" y="942" fontSize="11" fontWeight="400" fill="#f04848" stroke="#f04848" strokeWidth=".4" fontFamily="Liberation Sans">X</text>
      </svg>
    </div>
  );
}

function StatusBar() {
  return (
    <div className="flex h-[30px] flex-col bg-[#f6f6f6] text-[14.67px] text-[#111]">
      <div className="flex h-[29px] items-center">
        <span className="grow">就緒</span>
        <div className="flex h-[27px] w-10 items-center border-l border-[#d2d2d2] pl-[10px]">8</div>
        <div className="flex h-[27px] w-[38px] items-center border-l border-[#d2d2d2] pl-2">9</div>
      </div>
      <div className="flex h-px bg-[#e9d3dc]">
        <div className="ml-[742px] h-px w-[61px] bg-[#f5a35c]" />
        <div className="ml-[248px] h-px w-[61px] bg-[#f8f0f2]" />
      </div>
    </div>
  );
}

export default function App() {
  return (
    <div className="relative flex h-[1031px] w-[1920px] flex-col overflow-hidden font-['Noto_Sans','Noto_Sans_CJK_TC',sans-serif] font-light">
      <Defs />
      <div className="absolute top-0 left-[810px] flex h-px">
        <div className="w-[59px] bg-[#b03868]" />
        <div className="w-[241px] bg-[#e4e6e4]" />
      </div>
      <TitleBar />
      <TabRow />
      <Ribbon />
      <div className="flex min-h-0 grow">
        <Browser />
        <Canvas />
      </div>
      <StatusBar />
    </div>
  );
}
